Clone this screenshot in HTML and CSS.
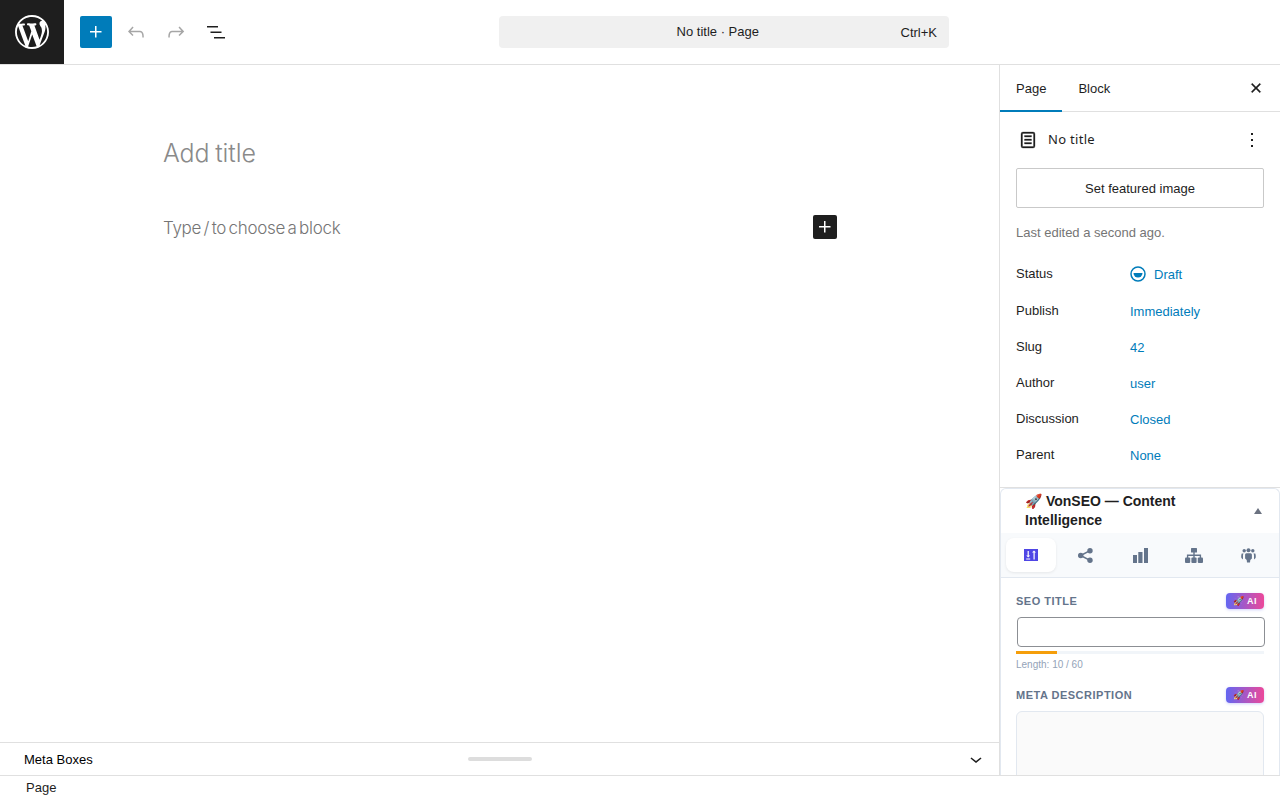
FILE: index.html
```html
<!DOCTYPE html>
<html lang="en">
<head>
<meta charset="utf-8">
<title>No title · Page</title>
<link rel="stylesheet" href="styles.css">
</head>
<body>
<div class="app">
  <header class="topbar">
    <a class="wp-logo"><svg class="logo-svg" viewBox="0 0 20 20"><path d="M20 10c0-5.51-4.49-10-10-10C4.48 0 0 4.49 0 10c0 5.52 4.48 10 10 10 5.51 0 10-4.48 10-10zM7.78 15.37L4.37 6.22c.55-.02 1.17-.08 1.17-.08.5-.06.44-1.13-.06-1.11 0 0-1.45.11-2.37.11-.18 0-.37 0-.58-.01C4.12 2.69 6.87 1.11 10 1.11c2.33 0 4.45.87 6.05 2.34-.68-.11-1.65.39-1.65 1.58 0 .74.45 1.36.9 2.1.35.61.55 1.36.55 2.46 0 1.49-1.4 5-1.4 5l-3.03-8.37c.54-.02.82-.17.82-.17.5-.05.44-1.25-.06-1.22 0 0-1.44.12-2.38.12-.87 0-2.33-.12-2.33-.12-.5-.03-.56 1.2-.06 1.22l.92.08 1.26 3.41zM17.41 10c.24-.64.74-1.87.43-4.25.7 1.29 1.05 2.71 1.05 4.25 0 3.29-1.73 6.24-4.4 7.78.97-2.59 1.94-5.2 2.92-7.78zM6.1 18.09C3.12 16.65 1.11 13.53 1.11 10c0-1.3.23-2.48.72-3.59C3.25 10.3 4.67 14.2 6.1 18.09zm4.03-6.63l2.58 6.98c-.86.29-1.76.45-2.71.45-.79 0-1.57-.11-2.29-.33.81-2.38 1.62-4.74 2.42-7.1z"/></svg></a>
    <div class="tools">
      <button class="tool tool-primary"><svg class="icon" viewBox="0 0 24 24"><path d="M11 12.5V17.5H12.5V12.5H17.5V11H12.5V6H11V11H6V12.5H11Z"/></svg></button>
      <button class="tool tool-off"><svg class="icon" viewBox="0 0 24 24"><path d="M18.3 11.7c-.6-.6-1.4-.9-2.3-.9H6.7l2.9-3.3-1.1-1-4.5 5L8.5 16l1-1-2.7-2.7H16c.5 0 .9.2 1.3.5 1 1 1 3.4 1 4.5v.3h1.5v-.2c0-1.5 0-4.3-1.5-5.7z"/></svg></button>
      <button class="tool tool-off"><svg class="icon" viewBox="0 0 24 24"><path d="M15.6 6.5l-1.1 1 2.9 3.3H8c-.9 0-1.7.3-2.3.9-1.4 1.5-1.4 4.2-1.4 5.6v.2h1.5v-.3c0-1.1 0-3.5 1-4.5.3-.3.7-.5 1.3-.5h9.2L14.5 15l1.1 1.1 4.6-4.6-4.6-5z"/></svg></button>
      <button class="tool"><svg class="icon" viewBox="0 0 24 24"><path d="M3 6h11v1.5H3V6Zm3.5 5.5h11V13h-11v-1.5ZM21 17H10v1.5h11V17Z"/></svg></button>
    </div>
    <div class="command">
      <span class="command-title">No title · Page</span>
      <span class="command-key">Ctrl+K</span>
    </div>
  </header>

  <div class="workspace">
    <div class="editor">
      <main class="canvas">
        <h1 class="post-title">Add title</h1>
        <div class="block-row">
          <p class="block-hint">Type / to choose a block</p>
          <button class="inserter"><svg class="inserter-icon" viewBox="0 0 24 24"><path d="M11 12.5V17.5H12.5V12.5H17.5V11H12.5V6H11V11H6V12.5H11Z"/></svg></button>
        </div>
      </main>
      <div class="metabar">
        <span class="metabar-label">Meta Boxes</span>
        <span class="metabar-handle"></span>
        <svg class="metabar-chevron" viewBox="0 0 24 24"><path d="M17.5 11.6L12 16l-5.5-4.4.9-1.2L12 14l4.5-3.6 1 1.2z"/></svg>
      </div>
    </div>

    <aside class="sidebar">
      <div class="side-tabs">
        <span class="side-tab side-tab-active">Page</span>
        <span class="side-tab">Block</span>
        <svg class="side-close" viewBox="0 0 24 24"><path d="M12 13.06l3.712 3.713 1.061-1.06L13.061 12l3.712-3.712-1.06-1.06L12 10.938 8.288 7.227l-1.061 1.06L10.939 12l-3.712 3.712 1.06 1.061L12 13.061z"/></svg>
      </div>

      <section class="doc">
        <div class="doc-head">
          <svg class="doc-icon" viewBox="0 0 24 24"><path d="M15.5 7.5h-7V9h7V7.5Zm-7 3.5h7v1.5h-7V11Zm7 3.5h-7V16h7v-1.5Z"/><path d="M17 4H7a2 2 0 0 0-2 2v12a2 2 0 0 0 2 2h10a2 2 0 0 0 2-2V6a2 2 0 0 0-2-2Zm.5 14a.5.5 0 0 1-.5.5H7a.5.5 0 0 1-.5-.5V6a.5.5 0 0 1 .5-.5h10a.5.5 0 0 1 .5.5v12Z"/></svg>
          <span class="doc-name">No title</span>
          <svg class="doc-more" viewBox="0 0 24 24"><path d="M13 19h-2v-2h2v2zm0-6h-2v-2h2v2zm0-6h-2V5h2v2z"/></svg>
        </div>
        <button class="featured">Set featured image</button>
        <p class="edited">Last edited a second ago.</p>
        <dl class="props">
          <div class="prop prop-status"><dt>Status</dt><dd class="status-value"><svg class="status-icon" viewBox="0 0 16 16"><circle cx="8" cy="8" r="7" fill="none" stroke="currentColor" stroke-width="1.5"/><path d="M3.5 7h9a4.5 4.5 0 0 1-9 0Z" fill="currentColor"/></svg>Draft</dd></div>
          <div class="prop"><dt>Publish</dt><dd>Immediately</dd></div>
          <div class="prop"><dt>Slug</dt><dd>42</dd></div>
          <div class="prop"><dt>Author</dt><dd>user</dd></div>
          <div class="prop"><dt>Discussion</dt><dd>Closed</dd></div>
          <div class="prop"><dt>Parent</dt><dd>None</dd></div>
        </dl>
      </section>

      <section class="seo">
        <div class="seo-head">
          <h2 class="seo-title">🚀 VonSEO — Content Intelligence</h2>
          <span class="seo-caret"></span>
        </div>
        <nav class="seo-tabs">
          <span class="seo-tab seo-tab-active"><svg class="seo-icon seo-icon-sort" viewBox="0 0 14 12"><rect width="14" height="12" fill="#4f46e5"/><path d="M3.600 2h1.200v4.500h1.400L4.200 8.600 2.200 6.500h1.400zM2.200 9.400h4v1h-4zM10 1.400l2 2.100h-1.300v7H9.500v-7H8z" fill="#fff"/></svg></span>
          <span class="seo-tab"><svg class="seo-icon" viewBox="0 0 15 15"><circle cx="12" cy="2.700" r="2.700"/><circle cx="2.700" cy="7.500" r="2.700"/><circle cx="12" cy="12.300" r="2.700"/><path d="M2.700 7.500L12 2.700M2.700 7.500l9.300 4.800" stroke="#64748b" stroke-width="1.500"/></svg></span>
          <span class="seo-tab"><svg class="seo-icon" viewBox="0 0 15 15"><rect x="0" y="7" width="4" height="8"/><rect x="5.300" y="4" width="4.200" height="11"/><rect x="11" y="0" width="4" height="15"/></svg></span>
          <span class="seo-tab"><svg class="seo-icon seo-icon-wide" viewBox="0 0 18 15"><rect x="6" y="0" width="6" height="4.500" rx=".5"/><rect x="0" y="9.500" width="5.200" height="5.500" rx="1"/><rect x="6.400" y="9.500" width="5.200" height="5.500" rx="1"/><rect x="12.800" y="9.500" width="5.200" height="5.500" rx="1"/><path d="M9 4v6M2.600 10V7.200h12.800V10" fill="none" stroke="#64748b" stroke-width="1.400"/></svg></span>
          <span class="seo-tab"><svg class="seo-icon" viewBox="0 0 15 15"><circle cx="3.200" cy="2.800" r="1.700"/><circle cx="7.500" cy="2.200" r="2"/><circle cx="11.800" cy="2.800" r="1.700"/><path d="M5.500 5.200h4c.9 0 1.400.8 1.400 1.800v3.500l-1.600 1.400-.3 2.600H6l-.3-2.600-1.600-1.400V7c0-1 .5-1.800 1.400-1.800z"/><path d="M.7 5.400h1.900c-.6.8-.6 1.600-.6 2.700v3.300L.4 10.100C.1 8.700.1 6.900.7 5.400zM14.300 5.400h-1.900c.6.8.6 1.600.6 2.700v3.300l1.600-1.300c.3-1.400.3-3.200-.3-4.700z"/></svg></span>
        </nav>
        <div class="seo-body">
          <div class="field-head">
            <label class="field-label">SEO TITLE</label>
            <span class="ai-badge">🚀 AI</span>
          </div>
          <input class="seo-input" type="text">
          <div class="meter"><div class="meter-fill"></div></div>
          <p class="field-note">Length: 10 / 60</p>
          <div class="field-head field-head-next">
            <label class="field-label">META DESCRIPTION</label>
            <span class="ai-badge">🚀 AI</span>
          </div>
          <textarea class="seo-textarea"></textarea>
        </div>
      </section>
    </aside>
  </div>

  <footer class="statusbar">Page</footer>
</div>
</body>
</html>
```

FILE: styles.css
```css
* { box-sizing: border-box; }
html, body { margin: 0; height: 100%; overflow: hidden; }
body { font-family: "Liberation Sans", Arial, sans-serif; font-size: 13px; color: #1e1e1e; background: #fff; }
button { font: inherit; color: inherit; background: none; border: 0; padding: 0; }
svg { display: block; fill: currentColor; }

.app { display: flex; flex-direction: column; height: 800px; }

.topbar { flex: 0 0 65px; display: flex; align-items: flex-start; border-bottom: 1px solid #e0e0e0; }
.wp-logo { width: 64px; height: 64px; background: #1e1e1e; color: #fff; display: flex; align-items: center; justify-content: center; }
.logo-svg { width: 34px; height: 34px; }
.tools { display: flex; gap: 8px; padding: 16px 0 0 16px; }
.tool { width: 32px; height: 32px; border-radius: 2px; display: flex; align-items: center; justify-content: center; }
.tool-primary { background: #007cba; color: #fff; }
.tool-off { color: #a6a6a6; }
.icon { width: 24px; height: 24px; }
.command { width: 450px; height: 32px; margin: 16px 0 0 267px; padding: 0 12px 0 36px; background: #f0f0f0; border-radius: 4px; display: flex; align-items: center; }
.command-title { flex: 1; text-align: center; margin-top: -1px; }
.command-key { color: #1e1e1e; }

.workspace { flex: 1; min-height: 0; display: flex; }

.editor { width: 1000px; display: flex; flex-direction: column; border-right: 1px solid #e0e0e0; }
.canvas { flex: 1; padding: 72px 0 0 163px; }
.post-title { margin: 0; font-family: Inter, sans-serif; font-weight: 300; font-size: 25px; line-height: 32px; letter-spacing: -0.1px; word-spacing: -1.2px; color: #8a8a8a; }
.block-row { display: flex; align-items: center; width: 674px; margin-top: 46px; height: 24px; justify-content: space-between; }
.block-hint { margin: 1px 0 0; font-family: Inter, sans-serif; font-weight: 300; font-size: 17px; letter-spacing: -0.3px; word-spacing: -2px; color: #757575; }
.inserter { width: 24px; height: 24px; background: #1e1e1e; color: #fff; border-radius: 2px; display: flex; align-items: center; justify-content: center; }
.inserter-icon { width: 24px; height: 24px; }

.metabar { flex: 0 0 33px; border-top: 1px solid #e0e0e0; display: flex; align-items: center; padding: 0 11px 0 24px; }
.metabar-label { color: #000; width: 444px; }
.metabar-handle { width: 64px; height: 4px; border-radius: 2px; background: #ddd; }
.metabar-chevron { width: 24px; height: 24px; margin-left: auto; color: #1e1e1e; }

.sidebar { width: 280px; overflow: hidden; }
.side-tabs { height: 47px; display: flex; align-items: stretch; border-bottom: 1px solid #e0e0e0; }
.side-tab { padding: 0 16px; display: flex; align-items: center; height: 47px; }
.side-tab-active { border-bottom: 2px solid #007cba; padding-top: 1px; }
.side-tab:not(.side-tab-active) { padding-bottom: 1px; }
.side-close { width: 24px; height: 24px; margin: 11px 12px 0 auto; stroke: currentColor; stroke-width: .3; }

.doc { padding: 0 16px; height: 376px; border-bottom: 1px solid #e0e0e0; }
.doc-head { display: flex; align-items: center; height: 56px; }
.doc-icon { width: 24px; height: 24px; stroke: currentColor; stroke-width: .3; }
.doc-name { font-family: "Noto Sans", sans-serif; margin-left: 8px; letter-spacing: 0.3px; margin-top: -2px; }
.doc-more { width: 24px; height: 24px; margin-left: auto; }
.featured { display: block; width: 248px; height: 40px; border: 1px solid #c9c9c9; border-radius: 2px; text-align: center; }
.edited { margin: 16px 0 0; line-height: 17px; color: #757575; }
.props { margin: 14px 0 0; }
.prop { display: flex; height: 36px; align-items: center; }
.prop-status { height: 38px; }
.prop dt { width: 114px; margin-top: -1px; }
.prop dd { margin: 1px 0 0; color: #007cba; }
.status-value { display: flex; align-items: center; gap: 8px; }
.status-icon { width: 16px; height: 16px; margin-top: -1px; }

.seo { border: 1px solid #e2e8f0; border-bottom: 0; border-radius: 6px 6px 0 0; }
.seo-head { height: 44px; padding: 3px 15px 0 24px; display: flex; }
.seo-title { margin: 0; width: 190px; font-size: 14px; line-height: 19px; font-weight: 700; color: #1e1e1e; }
.seo-caret { width: 0; height: 0; margin: 16px 2px 0 auto; border-left: 4px solid transparent; border-right: 4px solid transparent; border-bottom: 6px solid #6b7280; }
.seo-tabs { height: 45px; background: #f8fafc; border-bottom: 1px solid #e2e8f0; display: flex; gap: 4px; padding: 5px; }
.seo-tab { flex: 1; height: 34px; border-radius: 8px; display: flex; align-items: center; justify-content: center; color: #64748b; }
.seo-tab-active { background: #fff; box-shadow: 0 1px 3px rgba(0,0,0,.08); }
.seo-icon { width: 15px; height: 15px; }
.seo-icon-sort { width: 14px; height: 12px; }
.seo-icon-wide { width: 18px; height: 15px; }
.seo-body { padding: 15px 15px 0; }
.field-head { display: flex; justify-content: space-between; align-items: center; height: 16px; }
.field-head-next { margin-top: 16px; }
.field-label { font-size: 11px; font-weight: 700; letter-spacing: .5px; color: #64748b; }
.ai-badge { width: 38px; height: 16px; border-radius: 4px; background: linear-gradient(90deg, #6366f1, #ec4899); color: #fff; font-size: 9px; font-weight: 700; display: flex; align-items: center; justify-content: center; letter-spacing: .3px; box-shadow: 0 1px 3px rgba(99,102,241,.3); }
.seo-input { display: block; width: 248px; height: 30px; margin: 8px 0 0 1px; padding: 0 8px; border: 1px solid #8c8f94; border-radius: 4px; background: #fff; }
.meter { height: 3px; margin-top: 4px; background: #f1f5f9; width: 248px; }
.meter-fill { width: 41px; height: 3px; background: #f59e0b; }
.field-note { margin: 5px 0 0; font-size: 10px; line-height: 12px; color: #94a3b8; }
.seo-textarea { display: block; width: 248px; height: 74px; margin-top: 8px; border: 1px solid #e2e8f0; border-radius: 6px; background: #fafafa; }

.statusbar { flex: 0 0 25px; border-top: 1px solid #e0e0e0; padding: 4px 0 0 26px; line-height: 15px; background: #fff; }
```
